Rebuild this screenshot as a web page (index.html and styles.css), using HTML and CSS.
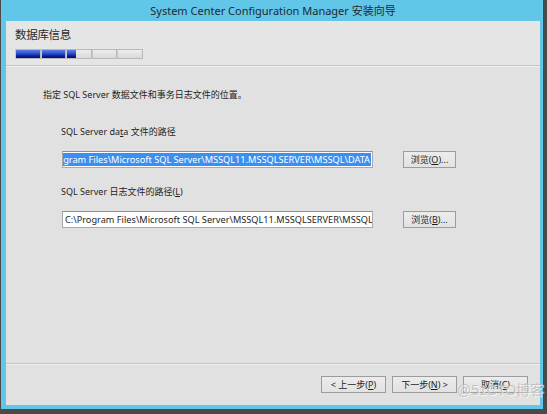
FILE: index.html
```html
<!DOCTYPE html>
<html>
<head>
<meta charset="utf-8">
<link rel="stylesheet" href="styles.css">
</head>
<body>
<div class="shell">
  <div class="window">
    <div class="titlebar">System Center Configuration Manager 安装向导</div>
    <div class="client">
      <div class="header">
        <div class="page-title">数据库信息</div>
        <div class="progress">
          <span class="seg"><span class="fill" style="width:100%"></span></span>
          <span class="seg"><span class="fill" style="width:100%"></span></span>
          <span class="seg"><span class="fill" style="width:36%"></span></span>
          <span class="seg"></span>
          <span class="seg"></span>
        </div>
      </div>
      <div class="body">
        <div class="intro">指定 SQL Server 数据文件和事务日志文件的位置。</div>
        <div class="group">
          <div class="label">SQL Server da<u>t</u>a 文件的路径</div>
          <div class="row">
            <div class="field sel"><span class="val">C:\Program Files\Microsoft SQL Server\MSSQL11.MSSQLSERVER\MSSQL\DATA</span></div>
            <button class="btn browse">浏览(<u>O</u>)...</button>
          </div>
        </div>
        <div class="group second">
          <div class="label">SQL Server 日志文件的路径(<u>L</u>)</div>
          <div class="row">
            <div class="field left"><span class="val">C:\Program Files\Microsoft SQL Server\MSSQL11.MSSQLSERVER\MSSQL\DATA</span></div>
            <button class="btn browse">浏览(<u>B</u>)...</button>
          </div>
        </div>
      </div>
      <div class="footer">
        <button class="btn nav">&lt; 上一步(<u>P</u>)</button>
        <button class="btn nav">下一步(<u>N</u>) &gt;</button>
        <button class="btn nav cancel">取消(<u>C</u>)</button>
      </div>
    </div>
  </div>
  <div class="watermark">@51CTO博客</div>
</div>
</body>
</html>
```

FILE: styles.css
```css
* { box-sizing: border-box; }
html, body { margin: 0; padding: 0; }
body {
  font-family: "Noto Sans", "Noto Sans CJK SC", sans-serif;
  color: #1e1e1e;
  background: #fff;
}
.shell {
  position: relative;
  width: 547px;
  height: 414px;
  background: #4a4a4a;
  padding: 0 4px 5px 1px;
}
.window {
  height: 100%;
  background: #62c6e8;
  padding: 0 3px 4px 5px;
  display: flex;
  flex-direction: column;
}
.titlebar {
  height: 21px;
  line-height: 22px;
  text-align: center;
  font-size: 11px;
  color: #1c2a33;
  white-space: nowrap;
}
.client {
  flex: 1;
  background: #e1e1e1;
  display: flex;
  flex-direction: column;
}
.header {
  height: 45px;
  background: #e5e5e5;
  border-bottom: 1px solid #c4c4c4;
  box-shadow: 0 1px 0 #f2f2f2;
  padding: 6px 0 0 9px;
}
.page-title {
  font-size: 11.5px;
  line-height: 16px;
  height: 16px;
  color: #2a2a2a;
  letter-spacing: -0.3px;
}
.progress {
  margin-top: 6px;
  display: flex;
  width: 128px;
  height: 10px;
}
.seg {
  flex: 1;
  height: 10px;
  border: 1px solid #b8b8b8;
  border-left-color: #c9c9c9;
  background: linear-gradient(#ececec, #dadada);
  display: flex;
}
.fill {
  height: 100%;
  background: linear-gradient(#5f7fe4 0%, #2a4ccc 45%, #0b1f9e 75%, #010f6e 100%);
}
.body {
  flex: 1;
  padding: 23px 0 0 37px;
  font-size: 9px;
}
.intro {
  line-height: 12px;
  height: 12px;
  white-space: nowrap;
}
.group {
  margin: 25px 0 0 18px;
}
.group.second {
  margin-top: 18px;
}
.label {
  line-height: 12px;
  height: 12px;
  white-space: nowrap;
}
.row {
  display: flex;
  align-items: center;
  gap: 30px;
  margin-top: 13px;
}
.field {
  width: 311px;
  height: 17px;
  margin-left: 1px;
  background: #fff;
  border: 1px solid #a9a9a9;
  border-top-color: #8e8e8e;
  padding: 1px;
  display: flex;
  overflow: hidden;
  white-space: nowrap;
  font-size: 9.2px;
  line-height: 13px;
}
.field.sel {
  justify-content: flex-end;
}
.field.sel .val {
  background: #3b8ff0;
  color: #fff;
  padding-right: 1px;
}
.field.left .val {
  padding-left: 1px;
  color: #1e1e1e;
}
.val { flex-shrink: 0; }
.btn {
  font-family: "Noto Sans", "Noto Sans CJK SC", sans-serif;
  font-size: 9px;
  color: #1e1e1e;
  background: linear-gradient(#ececec, #e2e2e2);
  border: 1px solid #9c9c9c;
  padding: 0;
  line-height: 14px;
  height: 17px;
  border-radius: 0;
}
.btn.browse {
  width: 53px;
}
.footer {
  height: 42px;
  border-top: 1px solid #c4c4c4;
  box-shadow: inset 0 1px 0 #efefef;
  display: flex;
  justify-content: flex-end;
  align-items: flex-start;
  gap: 6px;
  padding: 12px 12px 0 0;
}
.btn.nav {
  width: 65px;
  height: 17px;
}
.watermark {
  position: absolute;
  left: 457px;
  top: 381px;
  font-size: 14px;
  line-height: 18px;
  color: rgba(185, 185, 185, 0.8);
  text-shadow: 1px 1px 0 rgba(255,255,255,0.7);
  font-family: "Liberation Sans", "Noto Sans CJK SC", sans-serif;
  white-space: nowrap;
}
```
